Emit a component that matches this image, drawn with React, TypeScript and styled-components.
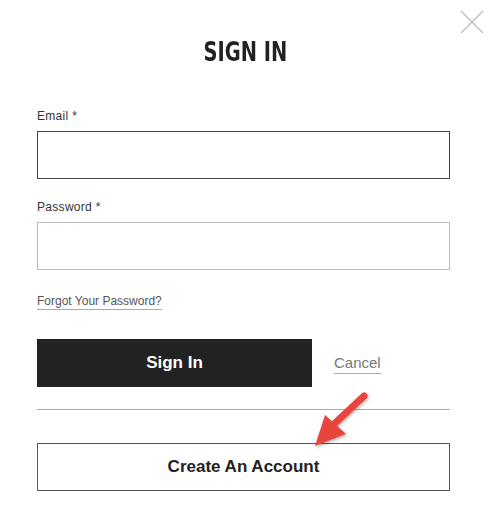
import styled, { createGlobalStyle } from 'styled-components'

const GlobalStyle = createGlobalStyle`
  body {
    margin: 0;
    background: #fff;
    font-family: "Liberation Sans", Arial, sans-serif;
  }
`

const Modal = styled.div`
  position: relative;
  width: 494px;
  height: 507px;
  box-sizing: border-box;
  padding: 36px 44px 0 37px;
  background: #fff;
`

const Title = styled.h1`
  margin: 0 0 41px;
  text-align: center;
  font-family: "DejaVu Sans Condensed", "Liberation Sans", sans-serif;
  font-weight: 700;
  font-size: 27px;
  line-height: 32px;
  color: #222;
  padding-left: 4px;

  span {
    display: inline-block;
    transform: scaleX(0.8);
  }
`

const Close = styled.button`
  position: absolute;
  top: 10px;
  right: 10px;
  width: 24px;
  height: 24px;
  padding: 0;
  border: 0;
  background: none;
  cursor: pointer;
`

const Field = styled.div`
  display: flex;
  flex-direction: column;
  gap: 8px;
  margin-bottom: 21px;
`

const Label = styled.label`
  font-size: 12px;
  line-height: 14px;
  color: #333;
  letter-spacing: 0.3px;
`

const Input = styled.input<{ $focused?: boolean }>`
  box-sizing: border-box;
  width: 100%;
  height: 48px;
  margin: 0;
  border: ${(p) => (p.$focused ? '1.5px solid #444' : '1px solid #bbb')};
  background: #fff;
  outline: none;
`

const TextLink = styled.a<{ $size?: number }>`
  align-self: flex-start;
  font-size: ${(p) => p.$size ?? 12}px;
  line-height: 1.2;
  color: #555;
  text-decoration: none;
  border-bottom: 1px solid #aaa;
  padding-bottom: 1px;
`

const Actions = styled.div`
  display: flex;
  align-items: center;
  gap: 22px;
  margin-top: 30px;
`

const PrimaryButton = styled.button`
  width: 275px;
  height: 48px;
  border: 0;
  background: #222;
  color: #fff;
  font-family: "Liberation Sans", Arial, sans-serif;
  font-weight: 700;
  font-size: 17px;
`

const Cancel = styled(TextLink)`
  align-self: center;
  color: #777;
  margin-top: 2px;
`

const Divider = styled.hr`
  margin: 22px 0 33px;
  border: 0;
  border-top: 1px solid #aaa;
`

const SecondaryButton = styled.button`
  box-sizing: border-box;
  width: 100%;
  height: 48px;
  border: 1.5px solid #555;
  background: #fff;
  color: #222;
  font-family: "Liberation Sans", Arial, sans-serif;
  font-weight: 700;
  font-size: 17px;
`

const Arrow = styled.svg`
  position: absolute;
  left: 305px;
  top: 388px;
  overflow: visible;
  pointer-events: none;
`

export default function App() {
  return (
    <>
      <GlobalStyle />
      <Modal>
        <Close aria-label="Close">
          <svg width="24" height="24" viewBox="0 0 24 24">
            <path d="M1 1 L23 23 M23 1 L1 23" stroke="#bbb" strokeWidth="1.3" fill="none" />
          </svg>
        </Close>
        <Title>
          <span>SIGN IN</span>
        </Title>
        <Field>
          <Label>Email *</Label>
          <Input $focused />
        </Field>
        <Field>
          <Label>Password *</Label>
          <Input type="password" />
        </Field>
        <TextLink href="#">Forgot Your Password?</TextLink>
        <Actions>
          <PrimaryButton>Sign In</PrimaryButton>
          <Cancel href="#" $size={15}>Cancel</Cancel>
        </Actions>
        <Divider />
        <SecondaryButton>Create An Account</SecondaryButton>
        <Arrow width="70" height="70" viewBox="0 0 70 70">
          <defs>
            <filter id="sh" x="-30%" y="-30%" width="160%" height="160%">
              <feDropShadow dx="1" dy="1.5" stdDeviation="1.5" floodColor="#000" floodOpacity="0.3" />
            </filter>
          </defs>
          <g filter="url(#sh)">
            <path d="M59 8 L29 36" stroke="#e8453c" strokeWidth="7" strokeLinecap="round" />
            <path d="M10 58 L20 27 L41 46 Z" fill="#e8453c" />
          </g>
        </Arrow>
      </Modal>
    </>
  )
}
